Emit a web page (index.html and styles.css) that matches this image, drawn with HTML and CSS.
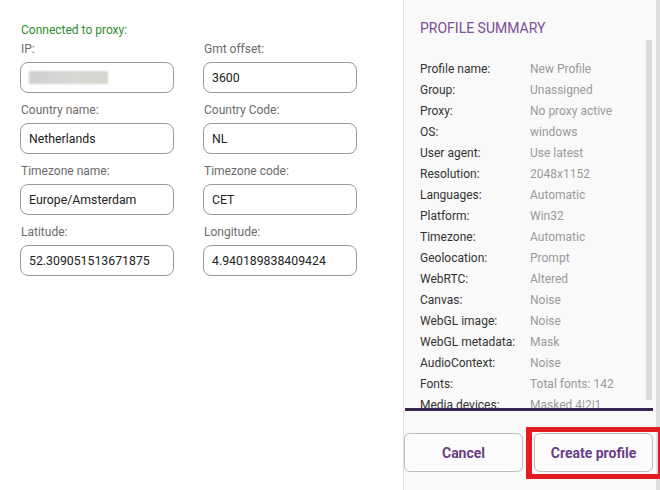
FILE: index.html
```html
<!DOCTYPE html>
<html>
<head>
<meta charset="utf-8">
<link rel="stylesheet" href="styles.css">
</head>
<body>
<div class="app">
  <div class="left">
    <div class="status">Connected to proxy:</div>
    <div class="grid">
      <div class="field"><div class="label">IP:</div><div class="input"><span class="blur"></span></div></div>
      <div class="field"><div class="label">Gmt offset:</div><div class="input">3600</div></div>
      <div class="field"><div class="label">Country name:</div><div class="input">Netherlands</div></div>
      <div class="field"><div class="label">Country Code:</div><div class="input">NL</div></div>
      <div class="field"><div class="label">Timezone name:</div><div class="input">Europe/Amsterdam</div></div>
      <div class="field"><div class="label">Timezone code:</div><div class="input">CET</div></div>
      <div class="field"><div class="label">Latitude:</div><div class="input">52.309051513671875</div></div>
      <div class="field"><div class="label">Longitude:</div><div class="input">4.940189838409424</div></div>
    </div>
  </div>
  <div class="panel">
    <div class="title">PROFILE SUMMARY</div>
    <div class="scroll">
      <div class="list">
        <div class="row"><span class="k">Profile name:</span><span class="v">New Profile</span></div>
        <div class="row"><span class="k">Group:</span><span class="v">Unassigned</span></div>
        <div class="row"><span class="k">Proxy:</span><span class="v">No proxy active</span></div>
        <div class="row"><span class="k">OS:</span><span class="v">windows</span></div>
        <div class="row"><span class="k">User agent:</span><span class="v">Use latest</span></div>
        <div class="row"><span class="k">Resolution:</span><span class="v">2048x1152</span></div>
        <div class="row"><span class="k">Languages:</span><span class="v">Automatic</span></div>
        <div class="row"><span class="k">Platform:</span><span class="v">Win32</span></div>
        <div class="row"><span class="k">Timezone:</span><span class="v">Automatic</span></div>
        <div class="row"><span class="k">Geolocation:</span><span class="v">Prompt</span></div>
        <div class="row"><span class="k">WebRTC:</span><span class="v">Altered</span></div>
        <div class="row"><span class="k">Canvas:</span><span class="v">Noise</span></div>
        <div class="row"><span class="k">WebGL image:</span><span class="v">Noise</span></div>
        <div class="row"><span class="k">WebGL metadata:</span><span class="v">Mask</span></div>
        <div class="row"><span class="k">AudioContext:</span><span class="v">Noise</span></div>
        <div class="row"><span class="k">Fonts:</span><span class="v">Total fonts: 142</span></div>
        <div class="row"><span class="k">Media devices:</span><span class="v">Masked 4|2|1</span></div>
      </div>
      <div class="track"><div class="thumb"></div></div>
    </div>
    <div class="buttons">
      <button class="btn">Cancel</button>
      <div class="hl-wrap">
        <button class="btn">Create profile</button>
        <div class="highlight"></div>
      </div>
    </div>
  </div>
  <div class="outer-bar"></div>
</div>
</body>
</html>
```
FILE: styles.css
```css
* { box-sizing: border-box; }
html, body { margin: 0; padding: 0; }
body {
  font-family: Roboto, "Liberation Sans", Arial, sans-serif;
  background: #ffffff;
  width: 660px;
  height: 490px;
  overflow: hidden;
}
.app {
  display: flex;
  height: 490px;
}
.left {
  width: 403px;
  padding: 23px 0 0 20px;
}
.status {
  color: #2e8b2e;
  font-size: 12px;
  line-height: 14px;
  padding-left: 1px;
  margin-bottom: 5px;
}
.grid {
  display: grid;
  grid-template-columns: 154px 154px;
  column-gap: 29px;
  row-gap: 10px;
}
.field {
  display: flex;
  flex-direction: column;
  gap: 6px;
}
.label {
  color: #6b6b6b;
  font-size: 12px;
  line-height: 14px;
  padding-left: 1px;
}
.input {
  height: 31px;
  border: 1px solid #9a9a9a;
  border-radius: 8px;
  padding: 0 8px;
  display: flex;
  align-items: center;
  font-size: 12.3px;
  color: #222;
}
.blur {
  display: block;
  width: 79px;
  height: 13px;
  background: linear-gradient(90deg, #cfcfd2, #d8d8d4 60%, #d4d6cc);
  filter: blur(1px);
}
.panel {
  width: 253px;
  background: #f9f9f9;
  border-left: 1px solid #e2e2e2;
  display: flex;
  flex-direction: column;
}
.title {
  color: #7a4f95;
  font-size: 14px;
  line-height: 16px;
  padding: 20px 0 0 16px;
  height: 40px;
}
.scroll {
  height: 371px;
  display: flex;
  border-bottom: 3px solid #3a2350;
  margin: 0 3px 0 1px;
  overflow: hidden;
}
.list {
  flex: 1;
  padding: 19px 0 0 15px;
}
.row {
  display: flex;
  font-size: 12px;
  line-height: 21px;
  white-space: nowrap;
}
.k { width: 110px; color: #333; }
.v { color: #9a9a9a; }
.track {
  width: 6px;
  margin-right: 1px;
  padding-bottom: 8px;
}
.thumb {
  height: 100%;
  background: #dcdcdc;
}
.buttons {
  display: flex;
  gap: 11px;
  padding: 22px 0 0 0;
}
.btn {
  width: 119px;
  height: 39px;
  border: 1px solid #bdbdbd;
  border-radius: 6px;
  background: #fdfcfd;
  color: #6a3e87;
  font-family: Roboto, "Liberation Sans", Arial, sans-serif;
  font-weight: 700;
  font-size: 14px;
  padding: 0;
}
.hl-wrap {
  position: relative;
}
.highlight {
  position: absolute;
  top: -6px;
  left: -8px;
  right: -10px;
  bottom: -7px;
  border: 5px solid #e31b23;
  border-left-width: 6px;
  pointer-events: none;
}
.outer-bar {
  width: 4px;
  background: #dedede;
}
```
